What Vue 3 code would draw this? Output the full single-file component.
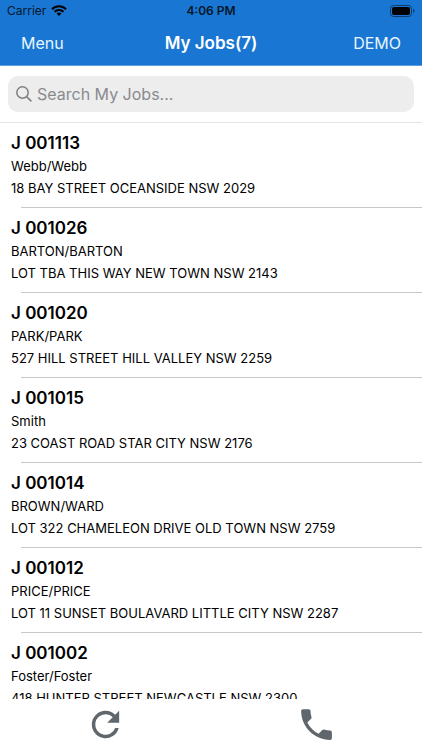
<script setup>
import { ref, computed } from 'vue'

const search = ref('')

const jobs = ref([
    { id: 'J 001113', client: 'Webb/Webb', address: '18 BAY STREET OCEANSIDE NSW 2029' },
    { id: 'J 001026', client: 'BARTON/BARTON', address: 'LOT TBA THIS WAY NEW TOWN NSW 2143' },
    { id: 'J 001020', client: 'PARK/PARK', address: '527 HILL STREET HILL VALLEY NSW 2259' },
    { id: 'J 001015', client: 'Smith', address: '23 COAST ROAD STAR CITY NSW 2176' },
    { id: 'J 001014', client: 'BROWN/WARD', address: 'LOT 322 CHAMELEON DRIVE OLD TOWN NSW 2759' },
    { id: 'J 001012', client: 'PRICE/PRICE', address: 'LOT 11 SUNSET BOULAVARD LITTLE CITY NSW 2287' },
    { id: 'J 001002', client: 'Foster/Foster', address: '418 HUNTER STREET NEWCASTLE NSW 2300' },
])

const filteredJobs = computed(() => {
    const text = search.value.toLowerCase()
    return jobs.value.filter(job => `${job.id} ${job.client} ${job.address}`.toLowerCase().includes(text))
})
</script>

<template>
    <div class="screen">
        <header class="header">
            <div class="status">
                <div class="carrier">
                    <span>Carrier</span>
                    <svg class="wifi" viewBox="0 0 16 11" aria-hidden="true">
                        <path d="M1 4.2a10 10 0 0 1 14 0M3.5 6.8a6.4 6.4 0 0 1 9 0" fill="none" stroke="currentColor" stroke-width="2" />
                        <path d="M8 11 5.6 8.6a3.4 3.4 0 0 1 4.8 0z" fill="currentColor" />
                    </svg>
                </div>
                <span class="time">4:06 PM</span>
                <svg class="battery" viewBox="0 0 25 12" aria-hidden="true">
                    <rect x="0.5" y="0.5" width="21" height="11" rx="3" fill="none" stroke="#0d3c6e" />
                    <rect x="2" y="2" width="18" height="8" rx="2" fill="#000" />
                    <path d="M23 4v4q1.5-.6 1.5-2T23 4z" fill="#0d3c6e" />
                </svg>
            </div>
            <nav class="nav">
                <button type="button" class="nav-btn">Menu</button>
                <h1 class="title">My Jobs({{ jobs.length }})</h1>
                <button type="button" class="nav-btn right">DEMO</button>
            </nav>
        </header>

        <div class="search">
            <label class="search-box">
                <svg class="search-icon" viewBox="0 0 16 16" aria-hidden="true">
                    <circle cx="6.5" cy="6.5" r="5.7" />
                    <path d="m10.6 10.6 4.8 4.8" />
                </svg>
                <input v-model="search" type="text" class="search-input" placeholder="Search My Jobs..." aria-label="Search My Jobs">
            </label>
        </div>

        <ul class="jobs">
            <li v-for="job in filteredJobs" :key="job.id" class="job">
                <h2 class="job-id">{{ job.id }}</h2>
                <p class="job-text">{{ job.client }}</p>
                <p class="job-text">{{ job.address }}</p>
            </li>
        </ul>

        <footer class="footer">
            <button type="button" class="tool" aria-label="Refresh">
                <svg viewBox="0 0 24 24" aria-hidden="true">
                    <path d="M17.65 6.35A7.958 7.958 0 0 0 12 4a8 8 0 1 0 7.73 10h-2.08A6 6 0 1 1 12 6c1.66 0 3.14.69 4.22 1.78L13 11h7V4z" />
                </svg>
            </button>
            <button type="button" class="tool" aria-label="Call">
                <svg viewBox="0 0 24 24" aria-hidden="true">
                    <path d="M6.62 10.79c1.44 2.83 3.76 5.14 6.59 6.59l2.2-2.2c.27-.27.67-.36 1.02-.24 1.12.37 2.33.57 3.57.57.55 0 1 .45 1 1V20c0 .55-.45 1-1 1C10.61 21 3 13.39 3 4c0-.55.45-1 1-1h3.5c.55 0 1 .45 1 1 0 1.25.2 2.45.57 3.57.11.35.03.74-.25 1.02z" />
                </svg>
            </button>
        </footer>
    </div>
</template>

<style>
body {
    margin: 0;
    background: #fff;
}
</style>

<style scoped>
.screen {
    display: flex;
    flex-direction: column;
    height: 100vh;
    font-family: Inter, "Liberation Sans", sans-serif;
    color: #000;
}

button {
    border: 0;
    padding: 0;
    background: none;
    font-family: inherit;
    cursor: pointer;
}

.header {
    background: #1976d2;
}

.status {
    display: grid;
    grid-template-columns: 1fr auto 1fr;
    align-items: center;
    height: 21px;
    padding: 0 7px;
    font-size: 12px;
    color: #04162b;
}

.carrier {
    display: flex;
    align-items: center;
    gap: 5px;
}

.wifi {
    width: 16px;
    height: 11px;
    color: #000;
}

.time {
    font-weight: 600;
}

.battery {
    justify-self: end;
    width: 25px;
    height: 12px;
}

.nav {
    display: grid;
    grid-template-columns: 1fr auto 1fr;
    align-items: center;
    height: 44px;
    padding: 0 21px;
    border-bottom: 1px solid #5e9fe0;
    color: #fff;
}

.nav-btn {
    font-size: 16px;
    color: #e8f6ff;
    text-align: left;
}

.right {
    text-align: right;
}

.title {
    margin: 0;
    font-size: 17px;
    font-weight: 600;
}

.search {
    padding: 10px 8px;
    border-bottom: 1px solid #e4e4e4;
}

.search-box {
    display: flex;
    align-items: center;
    gap: 5px;
    height: 36px;
    padding: 0 8px;
    border-radius: 10px;
    background: #ededed;
}

.search-icon {
    flex: none;
    width: 16px;
    height: 16px;
    fill: none;
    stroke: #7f7f82;
    stroke-width: 1.5;
}

.search-input {
    flex: 1;
    min-width: 0;
    border: 0;
    padding: 0;
    outline: 0;
    background: none;
    font-family: inherit;
    font-size: 16px;
}

.search-input::placeholder {
    color: #8a8a8d;
    opacity: 1;
}

.jobs {
    flex: 1;
    min-height: 0;
    margin: 0;
    padding: 0;
    overflow: hidden;
    list-style: none;
}

.job {
    padding: 8px 11px 9px;
    background: linear-gradient(#c8c8cc, #c8c8cc) 21px 100% / 100% 1px no-repeat;
}

.job-id {
    margin: 0;
    font-size: 17px;
    font-weight: 600;
    line-height: 24px;
}

.job-text {
    margin: 0;
    font-size: 13px;
    line-height: 22px;
}

.footer {
    display: flex;
    height: 51px;
}

.tool {
    display: flex;
    flex: 1;
    align-items: center;
    justify-content: center;
}

.tool svg {
    width: 41px;
    height: 41px;
    fill: #5f676c;
}
</style>
